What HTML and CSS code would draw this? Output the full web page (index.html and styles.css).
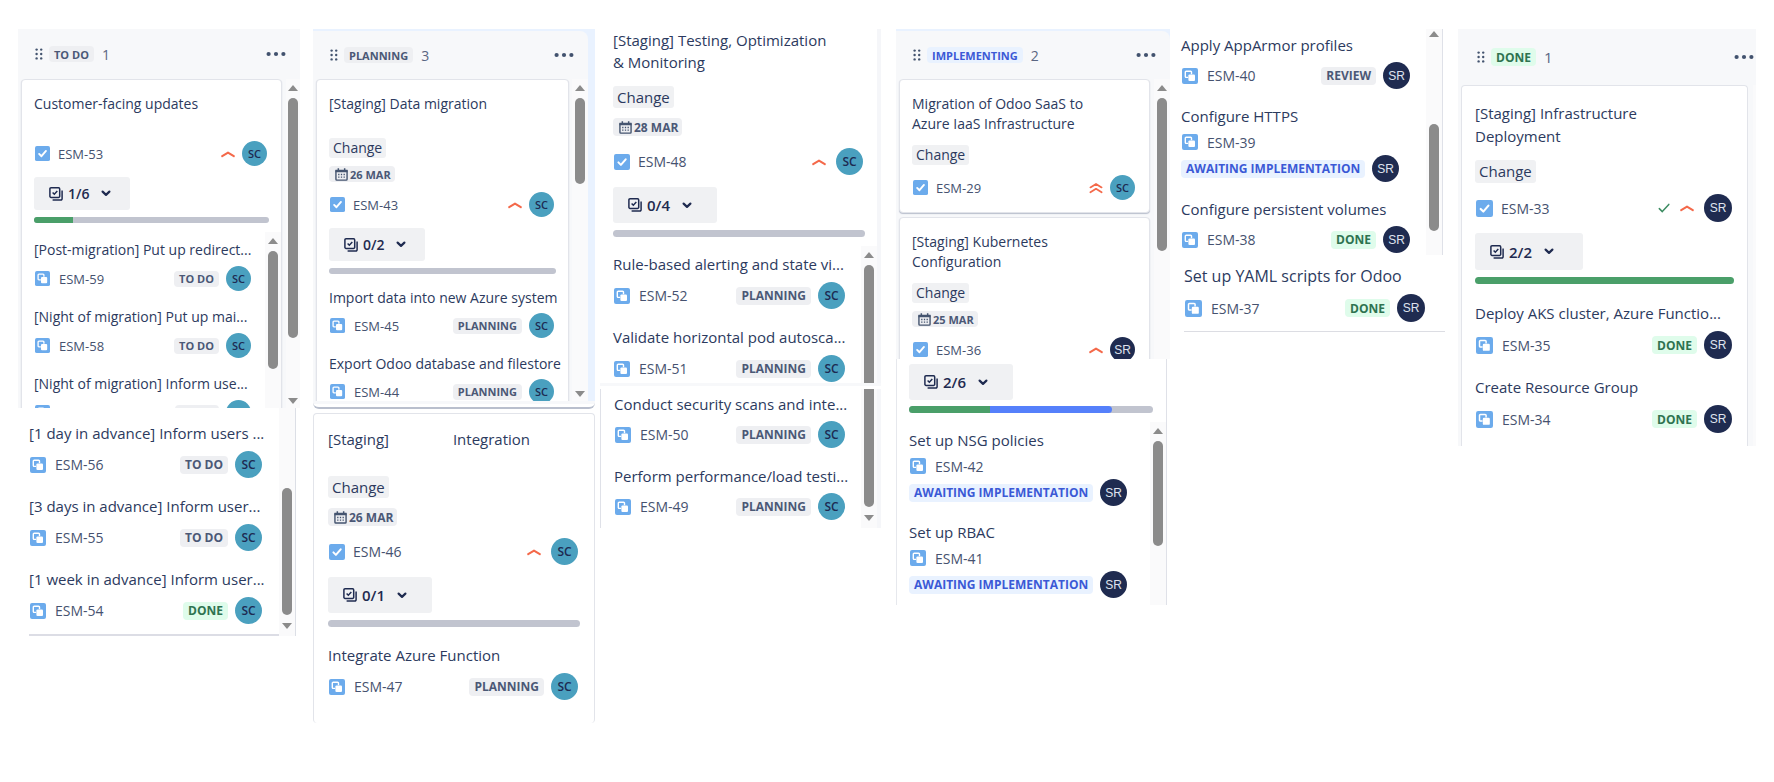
FILE: index.html
```html
<!DOCTYPE html>
<html lang="en">
<head>
<meta charset="utf-8">
<meta name="viewport" content="width=device-width, initial-scale=1">
<title>ESM board</title>
<link rel="stylesheet" href="styles.css">
</head>
<body>
<svg class="sprite" aria-hidden="true">
  <symbol id="grip" viewBox="0 0 8 12"><g fill="#44546f"><circle cx="1.6" cy="1.6" r="1.2"/><circle cx="6.2" cy="1.6" r="1.2"/><circle cx="1.6" cy="6" r="1.2"/><circle cx="6.2" cy="6" r="1.2"/><circle cx="1.6" cy="10.4" r="1.2"/><circle cx="6.2" cy="10.4" r="1.2"/></g></symbol>
  <symbol id="dots" viewBox="0 0 20 6"><g fill="#42526e"><circle cx="2.6" cy="3" r="2.1"/><circle cx="10" cy="3" r="2.1"/><circle cx="17.4" cy="3" r="2.1"/></g></symbol>
  <symbol id="task" viewBox="0 0 16 16"><rect width="16" height="16" rx="2" fill="#6cabec"/><path d="M4.4 8.4l2.5 2.5 4.8-5.6" fill="none" stroke="#fff" stroke-width="2" stroke-linecap="round" stroke-linejoin="round"/></symbol>
  <symbol id="subtask" viewBox="0 0 16 16"><rect width="16" height="16" rx="2" fill="#6cabec"/><path d="M6.2 9.4H4.2a.9.9 0 0 1-.9-.9V4.2a.9.9 0 0 1 .9-.9h4.4a.9.9 0 0 1 .9.9v2" fill="none" stroke="#fff" stroke-width="1.4"/><rect x="6.4" y="6.4" width="6.6" height="6.6" rx="1.1" fill="#fff"/></symbol>
  <symbol id="high" viewBox="0 0 14 8"><path d="M1.2 6.2L7 2.6l5.8 3.6" fill="none" stroke="#f4694a" stroke-width="2" stroke-linecap="round" stroke-linejoin="round"/></symbol>
  <symbol id="highest" viewBox="0 0 14 12"><path d="M1.4 5.4L7 2l5.6 3.4M1.4 10.2L7 6.8l5.6 3.4" fill="none" stroke="#f4694a" stroke-width="1.8" stroke-linecap="round" stroke-linejoin="round"/></symbol>
  <symbol id="tick" viewBox="0 0 12 10"><path d="M1.3 5.6l3 3L10.8 1.4" fill="none" stroke="#3c8c62" stroke-width="1.5" stroke-linecap="round" stroke-linejoin="round"/></symbol>
  <symbol id="stack" viewBox="0 0 14 14"><path d="M2 .8h7.6a1.1 1.1 0 0 1 1.1 1.1v7.4a1.1 1.1 0 0 1-1.1 1.1H2A1.1 1.1 0 0 1 .9 9.3V1.9A1.1 1.1 0 0 1 2 .8zM13.1 3.4v8.4a1.2 1.2 0 0 1-1.2 1.2H3.6M3.6 5.5l1.7 1.7 3-3.2" fill="none" stroke="#1f2b50" stroke-width="1.5"/></symbol>
  <symbol id="down" viewBox="0 0 10 7"><path d="M1.6 1.6L5 4.9l3.4-3.3" fill="none" stroke="#1f2b50" stroke-width="2.2" stroke-linecap="round" stroke-linejoin="round"/></symbol>
  <symbol id="calendar" viewBox="0 0 14 14"><path d="M1 3.2h12v8.9a.9.9 0 0 1-.9.9H1.9a.9.9 0 0 1-.9-.9z" fill="none" stroke="#44546f" stroke-width="1.5"/><path d="M.5 2h13v2.6H.5zM2.8.3h1.6V2.4H2.8zM9.6.3h1.6V2.4H9.6z" fill="#44546f"/><path d="M3.4 7h1.4M6.3 7h1.4M9.2 7h1.4M3.4 9.8h1.4M6.3 9.8h1.4M9.2 9.8h1.4" stroke="#44546f" stroke-width="1.4"/></symbol>
  <symbol id="tri-up" viewBox="0 0 10 6"><path d="M0 6L5 0l5 6z" fill="#8b8b8b"/></symbol>
  <symbol id="tri-down" viewBox="0 0 10 6"><path d="M0 0l5 6 5-6z" fill="#8b8b8b"/></symbol>
</svg>

<main class="board">

  <section class="column todo">
    <div class="pane sm">
      <header class="head">
        <svg class="grip"><use href="#grip"/></svg><span class="badge">TO DO</span><span class="count">1</span>
        <button class="more" aria-label="More actions"><svg><use href="#dots"/></svg></button>
      </header>
      <div class="body">
        <div class="cards">
          <article class="card">
            <h3 class="title roomy">Customer-facing updates</h3>
            <div class="row main"><svg class="type"><use href="#task"/></svg><a class="key" href="#esm-53">ESM-53</a><svg class="prio"><use href="#high"/></svg><span class="avatar">SC</span></div>
            <button class="toggle"><svg class="stack"><use href="#stack"/></svg>1/6<svg class="down"><use href="#down"/></svg></button>
            <div class="progress"><span class="green" style="width:16.7%"></span></div>
            <div class="scroller">
              <ul class="list">
                <li><p class="title">[Post-migration] Put up redirect...</p><div class="row"><svg class="type"><use href="#subtask"/></svg><a class="key" href="#esm-59">ESM-59</a><span class="badge">TO DO</span><span class="avatar">SC</span></div></li>
                <li><p class="title">[Night of migration] Put up mai...</p><div class="row"><svg class="type"><use href="#subtask"/></svg><a class="key" href="#esm-58">ESM-58</a><span class="badge">TO DO</span><span class="avatar">SC</span></div></li>
                <li><p class="title">[Night of migration] Inform use...</p><div class="row"><svg class="type"><use href="#subtask"/></svg><span class="key"></span><span class="badge blank"></span><span class="avatar"></span></div></li>
              </ul>
              <div class="bar"><svg class="tri"><use href="#tri-up"/></svg><span class="thumb t118"></span></div>
            </div>
          </article>
        </div>
        <div class="bar outer"><svg class="tri"><use href="#tri-up"/></svg><span class="thumb t240"></span><svg class="tri end"><use href="#tri-down"/></svg></div>
      </div>
    </div>
    <div class="pane lg rest">
      <div class="scroller">
        <ul class="list">
          <li><p class="title">[1 day in advance] Inform users ...</p><div class="row"><svg class="type"><use href="#subtask"/></svg><a class="key" href="#esm-56">ESM-56</a><span class="badge">TO DO</span><span class="avatar">SC</span></div></li>
          <li><p class="title">[3 days in advance] Inform user...</p><div class="row"><svg class="type"><use href="#subtask"/></svg><a class="key" href="#esm-55">ESM-55</a><span class="badge">TO DO</span><span class="avatar">SC</span></div></li>
          <li><p class="title">[1 week in advance] Inform user...</p><div class="row"><svg class="type"><use href="#subtask"/></svg><a class="key" href="#esm-54">ESM-54</a><span class="badge done">DONE</span><span class="avatar">SC</span></div></li>
        </ul>
        <div class="bar low"><span class="thumb t127"></span><svg class="tri"><use href="#tri-down"/></svg></div>
      </div>
    </div>
  </section>

  <section class="column planning">
    <div class="pane sm framed">
      <header class="head">
        <svg class="grip"><use href="#grip"/></svg><span class="badge">PLANNING</span><span class="count">3</span>
        <button class="more" aria-label="More actions"><svg><use href="#dots"/></svg></button>
      </header>
      <div class="body">
        <div class="cards">
          <article class="card">
            <h3 class="title roomy">[Staging] Data migration</h3>
            <span class="tag">Change</span>
            <span class="badge date"><svg><use href="#calendar"/></svg>26 MAR</span>
            <div class="row main"><svg class="type"><use href="#task"/></svg><a class="key" href="#esm-43">ESM-43</a><svg class="prio"><use href="#high"/></svg><span class="avatar">SC</span></div>
            <button class="toggle"><svg class="stack"><use href="#stack"/></svg>0/2<svg class="down"><use href="#down"/></svg></button>
            <div class="progress"></div>
            <ul class="list flat">
              <li><p class="title">Import data into new Azure system</p><div class="row"><svg class="type"><use href="#subtask"/></svg><a class="key" href="#esm-45">ESM-45</a><span class="badge">PLANNING</span><span class="avatar">SC</span></div></li>
              <li><p class="title">Export Odoo database and filestore</p><div class="row"><svg class="type"><use href="#subtask"/></svg><a class="key" href="#esm-44">ESM-44</a><span class="badge">PLANNING</span><span class="avatar">SC</span></div></li>
            </ul>
          </article>
        </div>
        <div class="bar outer"><svg class="tri"><use href="#tri-up"/></svg><span class="thumb t86"></span><svg class="tri end"><use href="#tri-down"/></svg></div>
      </div>
    </div>
    <div class="lip"></div>
    <article class="card lg single">
      <h3 class="title roomy split"><span>[Staging]</span> <span>Integration</span></h3>
      <span class="tag">Change</span>
      <span class="badge date"><svg><use href="#calendar"/></svg>26 MAR</span>
      <div class="row main"><svg class="type"><use href="#task"/></svg><a class="key" href="#esm-46">ESM-46</a><svg class="prio"><use href="#high"/></svg><span class="avatar">SC</span></div>
      <button class="toggle"><svg class="stack"><use href="#stack"/></svg>0/1<svg class="down"><use href="#down"/></svg></button>
      <div class="progress"></div>
      <ul class="list flat">
        <li><p class="title">Integrate Azure Function</p><div class="row"><svg class="type"><use href="#subtask"/></svg><a class="key" href="#esm-47">ESM-47</a><span class="badge">PLANNING</span><span class="avatar">SC</span></div></li>
      </ul>
    </article>
  </section>

  <section class="column testing">
    <article class="card lg upper">
      <h3 class="title">[Staging] Testing, Optimization<br>&amp; Monitoring</h3>
      <span class="tag">Change</span>
      <span class="badge date"><svg><use href="#calendar"/></svg>28 MAR</span>
      <div class="row main"><svg class="type"><use href="#task"/></svg><a class="key" href="#esm-48">ESM-48</a><svg class="prio"><use href="#high"/></svg><span class="avatar">SC</span></div>
      <button class="toggle"><svg class="stack"><use href="#stack"/></svg>0/4<svg class="down"><use href="#down"/></svg></button>
      <div class="progress"></div>
      <div class="scroller">
        <ul class="list">
          <li><p class="title">Rule-based alerting and state vi...</p><div class="row"><svg class="type"><use href="#subtask"/></svg><a class="key" href="#esm-52">ESM-52</a><span class="badge">PLANNING</span><span class="avatar">SC</span></div></li>
          <li><p class="title">Validate horizontal pod autosca...</p><div class="row"><svg class="type"><use href="#subtask"/></svg><a class="key" href="#esm-51">ESM-51</a><span class="badge">PLANNING</span><span class="avatar">SC</span></div></li>
        </ul>
        <div class="bar"><svg class="tri"><use href="#tri-up"/></svg><span class="thumb cut-bottom"></span></div>
      </div>
    </article>
    <div class="seam"></div>
    <div class="lg lower">
      <div class="scroller">
        <ul class="list">
          <li><p class="title">Conduct security scans and inte...</p><div class="row"><svg class="type"><use href="#subtask"/></svg><a class="key" href="#esm-50">ESM-50</a><span class="badge">PLANNING</span><span class="avatar">SC</span></div></li>
          <li><p class="title">Perform performance/load testi...</p><div class="row"><svg class="type"><use href="#subtask"/></svg><a class="key" href="#esm-49">ESM-49</a><span class="badge">PLANNING</span><span class="avatar">SC</span></div></li>
        </ul>
        <div class="bar low"><span class="thumb cut-top"></span><svg class="tri"><use href="#tri-down"/></svg></div>
      </div>
    </div>
  </section>

  <section class="column implementing">
    <div class="pane sm framed">
      <header class="head">
        <svg class="grip"><use href="#grip"/></svg><span class="badge active">IMPLEMENTING</span><span class="count">2</span>
        <button class="more" aria-label="More actions"><svg><use href="#dots"/></svg></button>
      </header>
      <div class="body">
        <div class="cards">
          <article class="card">
            <h3 class="title">Migration of Odoo SaaS to<br>Azure IaaS Infrastructure</h3>
            <span class="tag">Change</span>
            <div class="row main"><svg class="type"><use href="#task"/></svg><a class="key" href="#esm-29">ESM-29</a><svg class="prio tall"><use href="#highest"/></svg><span class="avatar">SC</span></div>
          </article>
          <article class="card">
            <h3 class="title">[Staging] Kubernetes<br>Configuration</h3>
            <span class="tag">Change</span>
            <span class="badge date"><svg><use href="#calendar"/></svg>25 MAR</span>
            <div class="row main"><svg class="type"><use href="#task"/></svg><a class="key" href="#esm-36">ESM-36</a><svg class="prio"><use href="#high"/></svg><span class="avatar navy">SR</span></div>
          </article>
        </div>
        <div class="bar outer"><svg class="tri"><use href="#tri-up"/></svg><span class="thumb t153"></span></div>
      </div>
    </div>
    <div class="lg rest">
      <button class="toggle"><svg class="stack"><use href="#stack"/></svg>2/6<svg class="down"><use href="#down"/></svg></button>
      <div class="progress"><span class="green" style="width:33.3%"></span><span class="blue" style="width:50%"></span></div>
      <div class="scroller">
        <ul class="list">
          <li><p class="title">Set up NSG policies</p><div class="row wrap"><svg class="type"><use href="#subtask"/></svg><a class="key" href="#esm-42">ESM-42</a></div><div class="row state"><span class="badge active">AWAITING IMPLEMENTATION</span><span class="avatar navy">SR</span></div></li>
          <li><p class="title">Set up RBAC</p><div class="row wrap"><svg class="type"><use href="#subtask"/></svg><a class="key" href="#esm-41">ESM-41</a></div><div class="row state"><span class="badge active">AWAITING IMPLEMENTATION</span><span class="avatar navy">SR</span></div></li>
        </ul>
        <div class="bar"><svg class="tri"><use href="#tri-up"/></svg><span class="thumb t105"></span></div>
      </div>
    </div>
  </section>

  <section class="column more-tasks">
    <div class="lg upper">
      <div class="scroller">
        <ul class="list">
          <li><p class="title">Apply AppArmor profiles</p><div class="row"><svg class="type"><use href="#subtask"/></svg><a class="key" href="#esm-40">ESM-40</a><span class="badge">REVIEW</span><span class="avatar navy">SR</span></div></li>
          <li><p class="title">Configure HTTPS</p><div class="row wrap"><svg class="type"><use href="#subtask"/></svg><a class="key" href="#esm-39">ESM-39</a></div><div class="row state"><span class="badge active">AWAITING IMPLEMENTATION</span><span class="avatar navy">SR</span></div></li>
          <li><p class="title">Configure persistent volumes</p><div class="row"><svg class="type"><use href="#subtask"/></svg><a class="key" href="#esm-38">ESM-38</a><span class="badge done">DONE</span><span class="avatar navy">SR</span></div></li>
        </ul>
        <div class="bar"><svg class="tri"><use href="#tri-up"/></svg><span class="thumb t107"></span></div>
      </div>
    </div>
    <ul class="list xl last">
      <li><p class="title">Set up YAML scripts for Odoo</p><div class="row"><svg class="type"><use href="#subtask"/></svg><a class="key" href="#esm-37">ESM-37</a><span class="badge done">DONE</span><span class="avatar navy">SR</span></div></li>
    </ul>
  </section>

  <section class="column finished">
    <div class="pane xl">
      <header class="head">
        <svg class="grip"><use href="#grip"/></svg><span class="badge done">DONE</span><span class="count">1</span>
        <button class="more" aria-label="More actions"><svg><use href="#dots"/></svg></button>
      </header>
      <div class="body">
        <div class="cards">
          <article class="card">
            <h3 class="title">[Staging] Infrastructure<br>Deployment</h3>
            <span class="tag">Change</span>
            <div class="row main"><svg class="type"><use href="#task"/></svg><a class="key" href="#esm-33">ESM-33</a><svg class="tick"><use href="#tick"/></svg><svg class="prio"><use href="#high"/></svg><span class="avatar navy">SR</span></div>
            <button class="toggle"><svg class="stack"><use href="#stack"/></svg>2/2<svg class="down"><use href="#down"/></svg></button>
            <div class="progress"><span class="green" style="width:100%"></span></div>
            <ul class="list flat">
              <li><p class="title">Deploy AKS cluster, Azure Functio...</p><div class="row"><svg class="type"><use href="#subtask"/></svg><a class="key" href="#esm-35">ESM-35</a><span class="badge done">DONE</span><span class="avatar navy">SR</span></div></li>
              <li><p class="title">Create Resource Group</p><div class="row"><svg class="type"><use href="#subtask"/></svg><a class="key" href="#esm-34">ESM-34</a><span class="badge done">DONE</span><span class="avatar navy">SR</span></div></li>
            </ul>
          </article>
        </div>
        <div class="edge"></div>
      </div>
    </div>
  </section>

</main>
</body>
</html>
```

FILE: styles.css
```css
* { box-sizing: border-box; }
body {
  margin: 0;
  background: #fff;
  color: #2c3a5e;
  font-family: "Open Sans", "Noto Sans", sans-serif;
}
h3, p, ul { margin: 0; padding: 0; font-weight: 400; }
ul { list-style: none; }
button { border: 0; padding: 0; background: none; color: inherit; font: inherit; cursor: pointer; }
a { color: inherit; text-decoration: none; }
svg { display: block; flex: none; }
.sprite { position: absolute; width: 0; height: 0; }

/* size steps */
.sm { --text: 14px; --line: 20px; --small: 13px; --caps: 11px; --chip: 16px; --face: 25px; --icon: 15px; --btn: 33px; --btn-w: 96px; --track: 6px; --step: 11px; --near: 7px; }
.lg { --text: 15px; --line: 22px; --small: 14px; --caps: 12px; --chip: 18px; --face: 27px; --icon: 16px; --btn: 36px; --btn-w: 104px; --track: 7px; --step: 12px; --near: 10px; }
.xl { --text: 16px; --line: 23px; --small: 14px; --caps: 12px; --chip: 18px; --face: 28px; --icon: 17px; --btn: 37px; --btn-w: 108px; --track: 7px; --step: 11px; --near: 10px; }
.finished .xl { --text: 15px; }

.board {
  display: grid;
  grid-template-columns: 295fr 287fr 296fr 280fr 282fr 298fr;
  align-items: start;
  padding: 29px 18px 0;
}
.column { min-width: 0; }
.todo { margin-right: 13px; }
.planning { margin-right: 5px; }
.testing { margin-right: 15px; }
.implementing { margin-right: 6px; }
.more-tasks { margin-right: 13px; }

/* column header */
.head {
  display: flex;
  align-items: center;
  height: 50px;
  padding: 0 14px 0 17px;
  background: #f7f8fa;
}
.grip { width: 8px; height: 12px; margin-right: 6px; }
.count { margin-left: 8px; font-size: var(--text); color: #5a6682; }
.more { margin-left: auto; }
.more svg { width: 20px; height: 6px; }
.framed { background: #e9f2ff; padding-top: 2px; }
.framed .head { height: 48px; border-top-right-radius: 8px; }
.planning .framed { padding-right: 7px; }

.body { display: flex; overflow: hidden; background: #f7f8fa; }
.cards { flex: 1; min-width: 0; padding-left: 3px; }
.card {
  padding: 14px 12px 13px;
  border: 1px solid #e2e4ea;
  border-radius: 4px;
  background: #fff;
  box-shadow: 0 1px 1px #b9bfcd;
}
.card + .card { margin-top: 4px; }
.todo .body { height: 329px; }
.planning .body { height: 322px; }
.implementing .body { height: 280px; }

/* card parts */
.title { font-size: var(--text); line-height: var(--line); white-space: nowrap; }
.card > .title { margin-bottom: 12px; }
.card > .title.roomy { margin-bottom: 24px; }
.split span + span { margin-left: 60px; }
.tag {
  display: block;
  width: fit-content;
  padding: 0 4px;
  border-radius: 3px;
  background: #f0f1f3;
  font-size: var(--text);
  line-height: var(--line);
}
.badge {
  display: flex;
  align-items: center;
  width: fit-content;
  height: var(--chip);
  padding: 0 5px;
  border-radius: 4px;
  background: #eeeff2;
  color: #4b5876;
  font-size: var(--caps);
  font-weight: 700;
  white-space: nowrap;
}
.badge.blank { width: 44px; }
.badge.done { background: #dffceb; color: #2f7350; }
.badge.active { background: #e9f2ff; color: #3b59d6; }
.badge.date { gap: 2px; margin-top: 10px; padding: 0 4px 0 6px; }
.date svg { width: 13px; height: 13px; }

.row { display: flex; align-items: center; min-height: var(--face); margin-top: 6px; padding-left: 1px; }
.row.main { margin-top: var(--step); padding-right: 2px; }
.type { width: var(--icon); height: var(--icon); }
.key { margin: 0 auto 0 9px; font-size: var(--small); font-weight: 500; color: #46526f; }
.main .key { margin-left: 8px; }
.prio { width: 14px; height: 8px; }
.prio.tall { height: 12px; }
.tick { width: 12px; height: 10px; margin-right: 10px; }
.avatar {
  display: grid;
  place-items: center;
  width: var(--face);
  height: var(--face);
  margin-left: 7px;
  border-radius: 50%;
  background: #4aa0bf;
  color: #1d2b52;
  font-size: var(--caps);
  font-weight: 600;
}
.main .avatar { margin-left: var(--near); }
.avatar.navy { background: #1f2b50; color: #dfe3ee; font-family: "Liberation Sans", sans-serif; font-size: 12px; font-weight: 400; }
.row.wrap { min-height: 20px; margin-top: 5px; }
.row.state { margin-top: 3px; padding-left: 0; }

.toggle {
  display: flex;
  align-items: center;
  width: var(--btn-w);
  height: var(--btn);
  margin-top: var(--step);
  padding-left: 15px;
  border-radius: 3px;
  background: #f0f1f3;
  color: #1f2b50;
  font-size: var(--text);
  font-weight: 600;
}
.stack { width: 14px; height: 14px; margin-right: 5px; }
.down { width: 10px; height: 7px; margin-left: 12px; }
.progress { display: flex; height: var(--track); margin-top: 7px; overflow: hidden; border-radius: 4px; background: #c1c4cf; }
.green { background: #4a9f69; }
.blue { background: #5580fb; border-radius: 0 4px 4px 0; }

/* subtasks */
.scroller { display: flex; margin: 9px -12px 0 0; }
.list { flex: 1; min-width: 0; padding: 8px 14px 0 0; }
.list li + li { margin-top: 17px; }
.list.flat { padding: 17px 2px 0 0; }
.sm .list li + li { margin-top: 16px; }

/* scroll bars */
.bar { display: flex; flex-direction: column; align-items: center; width: 16px; padding-top: 6px; background: #fafafb; }
.tri { width: 10px; height: 6px; }
.tri.end { margin-top: auto; margin-bottom: 4px; }
.thumb { width: 10px; margin-top: 7px; border-radius: 5px; background: #8b8b8b; }
.outer { width: 16px; margin-left: 4px; }
.t86 { height: 86px; }
.t105 { height: 105px; }
.t107 { height: 107px; }
.t118 { height: 118px; }
.t127 { height: 127px; }
.t153 { height: 153px; }
.t240 { height: 240px; }
.cut-bottom { flex: 1; border-radius: 5px 5px 0 0; }
.cut-top { flex: 1; margin-top: 0; border-radius: 0 0 5px 5px; }
.low { justify-content: flex-end; padding: 0 0 7px; }
.low .tri { margin-top: 8px; }

.todo .outer { width: 14px; }
.todo .card > .title.roomy { margin-bottom: 27px; }
.todo .rest { padding-left: 11px; padding-right: 4px; }
.todo .rest .scroller { margin: 0; border-right: 1px solid #dcdfe6; }
.todo .rest .list { padding: 14px 17px 10px 0; border-bottom: 2px solid #dcdde5; }
.todo .rest .row { margin-top: 7px; }

.planning .sm .card { padding-bottom: 0; }
.planning .outer { margin-left: 3px; }
.planning .sm .row.main { margin-top: 10px; }
.planning .sm .date { margin-top: 8px; }
.planning .sm .list { padding-top: 14px; }
.planning .sm .list .row { margin-top: 5px; }
.lip { height: 8px; border-bottom: 2px solid #b9bfcd; border-radius: 0 0 6px 6px; background: #fff; box-shadow: inset 0 3px #f7f8fa; }
.single { margin-top: 4px; padding: 14px 14px 23px; border-bottom: 0; box-shadow: none; }
.card.single > .roomy { margin-bottom: 26px; }
.single .list .row { margin-top: 7px; }

.testing .upper { padding: 0 12px 0 13px; border-width: 0 4px 0 0; border-color: #f5f6f9; border-radius: 0; box-shadow: none; }
.testing .upper .title { margin-bottom: 13px; }
.testing .list .title { margin-bottom: 0; }
.testing .upper .list { padding: 7px 16px 1px 0; }
.testing .upper .list .title { margin-bottom: 0; }
.testing .upper .list .row { margin-top: 7px; }
.seam { height: 6px; border-top: 3px solid #f7f8fa; }
.lower { padding-left: 13px; border-left: 1px solid #dfe1e8; border-right: 4px solid #f5f6f9; }
.lower .scroller { margin: 0; }
.lower .list { padding: 4px 16px 8px 0; }

.implementing .card { padding-bottom: 12px; }
.implementing .card > .title { margin-bottom: 11px; }
.implementing .sm .row.main { margin-top: 10px; }
.implementing .sm .date { margin-top: 8px; }
.implementing .rest { margin-right: 3px; padding: 5px 0 0 12px; border-left: 1px solid #e6e8ed; border-right: 1px solid #dfe1e8; }
.implementing .rest .toggle { margin-top: 0; }
.implementing .rest .progress { margin: 6px 13px 0 0; }
.implementing .rest .scroller { margin-right: 0; }
.implementing .rest .list { padding: 7px 14px 7px 0; }
.implementing .rest li + li { margin-top: 15px; }

.more-tasks .upper { padding-left: 5px; margin-right: 2px; }
.more-tasks .upper .scroller { margin: 0; border-right: 1px solid #dfe1e8; }
.more-tasks .upper .list { padding: 5px 16px 2px 0; }
.more-tasks .upper li + li { margin-top: 16px; }
.more-tasks .upper .bar { padding-top: 2px; }
.more-tasks .t107 { margin-top: 87px; }
.last { margin-left: 8px; padding: 10px 20px 9px 0; border-bottom: 1px solid #dcdde3; }

.finished .head { height: 56px; padding: 0 2px 0 19px; }
.finished .card { padding: 16px 13px 13px; border-bottom: 0; box-shadow: none; border-radius: 4px 4px 0 0; }
.finished .list { padding-top: 18px; }
.edge { width: 8px; border-right: 3px solid #fafafb; }
```
